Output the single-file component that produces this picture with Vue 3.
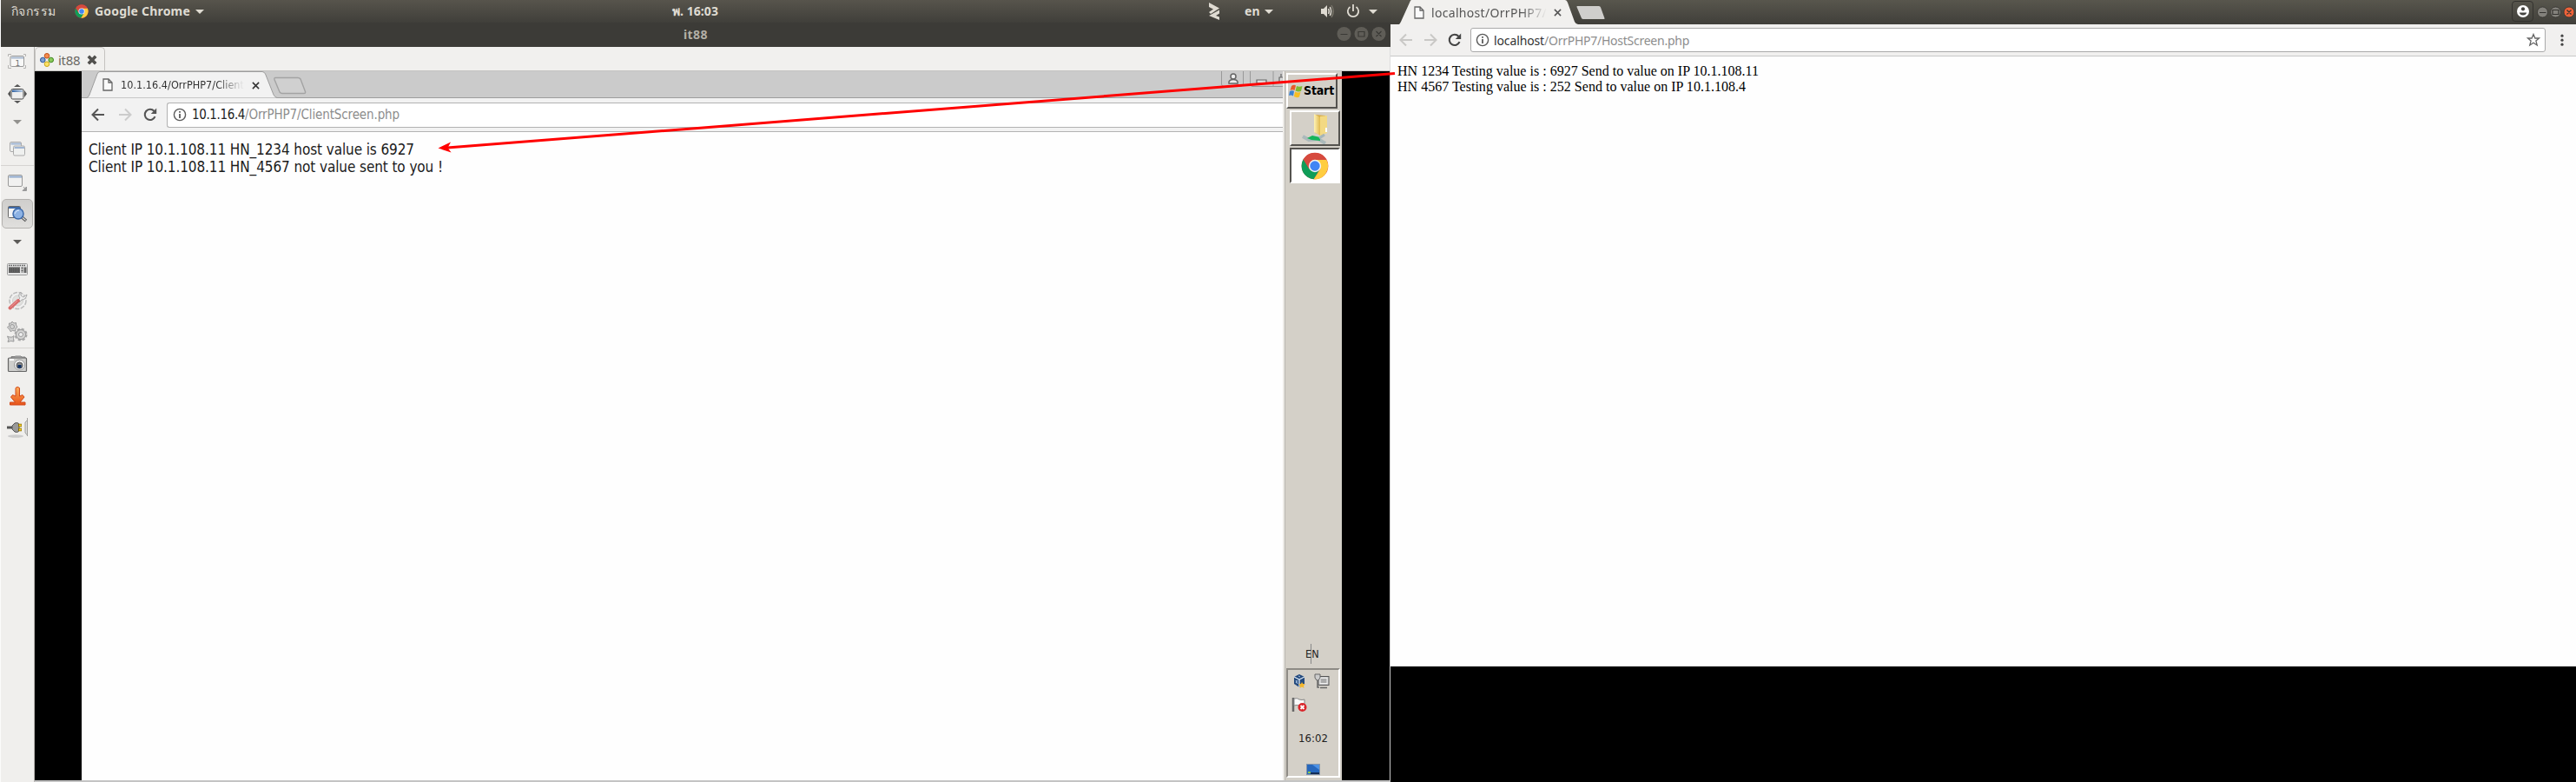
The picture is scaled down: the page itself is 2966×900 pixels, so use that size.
<script setup>
// Spreads a label's letters so that it takes up a given width.
const vFit = {
  mounted(el, { value }) {
    const width = el.getBoundingClientRect().width
    const count = Array.from(el.textContent).length
    el.style.letterSpacing = (value - width) / count + 'px'
  }
}

const tools = [
  { name: 'fit', h: 34 },
  { name: 'full', h: 40 },
  { name: 'caret', h: 24 },
  { name: 'windows', h: 38 },
  { name: 'sep', h: 1 },
  { name: 'resize', h: 38 },
  { name: 'scale', h: 34, active: true },
  { name: 'caret', h: 30, dark: true },
  { name: 'keyboard', h: 34 },
  { name: 'prefs', h: 38 },
  { name: 'gears', h: 35 },
  { name: 'sep', h: 1 },
  { name: 'camera', h: 37 },
  { name: 'down', h: 36 },
  { name: 'plug', h: 36 }
]
</script>

<template>
  <div class="desk">
    <svg class="defs" width="0" height="0">
      <defs>
        <symbol id="chrome" viewBox="0 0 48 48">
          <circle cx="24" cy="24" r="23" fill="#db4437" />
          <path d="M4 12.5A23 23 0 0 0 22 47L33 29L24 24L14 29Z" fill="#0f9d58" />
          <path d="M44 13.5A23 23 0 0 1 22 47L34 28L24 13.5Z" fill="#ffcd40" />
          <path d="M4 12.5A23 23 0 0 1 44 13.5H24L14 29Z" fill="#d64a3e" />
          <circle cx="24" cy="24" r="10.8" fill="#f4f4f4" />
          <circle cx="24" cy="24" r="8.5" fill="#4285f4" />
        </symbol>
        <symbol id="back" viewBox="0 0 16 16">
          <path d="M15 8H2M8 1.5L1.5 8L8 14.5" fill="none" stroke="currentColor" stroke-width="2" />
        </symbol>
        <symbol id="reload" viewBox="0 0 16 16">
          <path d="M13.5 10.2A6.1 6.1 0 1 1 12.4 3.8" fill="none" stroke="currentColor" stroke-width="2.1" />
          <path d="M15.2 0.6V7H8.8Z" fill="currentColor" />
        </symbol>
        <symbol id="info" viewBox="0 0 16 16">
          <circle cx="8" cy="8" r="6.6" fill="none" stroke="#5a5a5a" stroke-width="1.4" />
          <path d="M8 4V5.8M8 7V12" stroke="#5a5a5a" stroke-width="1.8" />
        </symbol>
        <symbol id="page" viewBox="0 0 12 15">
          <path d="M1 1H7L11 5V14H1ZM7 1V5H11" fill="#fafafa" stroke="#666" stroke-width="1.3" />
        </symbol>
        <symbol id="cross" viewBox="0 0 10 10">
          <path d="M1 1L9 9M9 1L1 9" stroke="currentColor" stroke-width="1.7" />
        </symbol>
        <linearGradient id="blue" x1="0" x2="1"><stop offset="0" stop-color="#3465a4" /><stop offset="1" stop-color="#b9cbe2" /></linearGradient>
        <linearGradient id="orange" x1="0" y1="0" x2="0" y2="1"><stop offset="0" stop-color="#fcae5c" /><stop offset="1" stop-color="#e8541a" /></linearGradient>
        <linearGradient id="folder" x1="0" x2="1"><stop offset="0" stop-color="#fff3b5" /><stop offset="1" stop-color="#e0b94e" /></linearGradient>
      </defs>
    </svg>

    <section class="left">
      <header class="topbar">
        <span class="activities"><span v-fit="52">กิจกรรม</span></span>
        <svg width="16" height="16"><use href="#chrome" /></svg>
        <span class="app"><b v-fit="110">Google Chrome</b></span>
        <i class="tri"></i>
        <span class="clock"><b v-fit="53">พ. 16:03</b></span>
        <span class="grow"></span>
        <svg class="zed" width="12" height="20" viewBox="0 0 12 20"><path d="M0 0L12 6.500L2 13L0 11L5 7.500L0 5ZM12 8.500V12.500L8 15L12 16.500V20L0 15Z" fill="#dfdbd2" /></svg>
        <span class="lang"><b v-fit="18">en</b></span>
        <i class="tri"></i>
        <svg class="vol" width="16" height="16" viewBox="0 0 16 16"><path d="M0 5H3L7 1V15L3 11H0Z" fill="#dfdbd2" /><path d="M8.6 5Q10 8 8.6 11" fill="none" stroke="#dfdbd2" stroke-width="1.6" /><path d="M10.3 3Q13 8 10.3 13" fill="none" stroke="#dfdbd2" stroke-width="1.5" /><path d="M12 1.2Q16.5 8 12 14.8" fill="none" stroke="#777469" stroke-width="1.5" /></svg>
        <svg class="power" width="16" height="16" viewBox="0 0 16 16"><path d="M4.5 2.9A6.2 6.2 0 1 0 11.5 2.9M8 0V8" fill="none" stroke="#dfdbd2" stroke-width="1.8" /></svg>
        <i class="tri last"></i>
      </header>
      <div class="winbar">
        <b v-fit="28">it88</b>
        <svg class="winbtns" width="58" height="18" viewBox="0 0 58 18">
          <g fill="#5f5d57"><circle cx="8.5" cy="9" r="8" /><circle cx="28.5" cy="9" r="8" /><circle cx="48.5" cy="9" r="8" /></g>
          <path d="M4.5 9.5H12.5M25 6.5H32V12H25ZM45.5 6L51.5 12M51.5 6L45.5 12" fill="none" stroke="#3a3935" stroke-width="1.2" />
        </svg>
      </div>

      <div class="remote">
        <nav class="side">
          <div v-for="(t, i) in tools" :key="i" class="tool" :class="{ active: t.active, sep: t.name === 'sep' }" :style="{ height: t.h + 'px' }">
            <svg v-if="t.name !== 'sep'" width="30" height="30" viewBox="0 0 30 30">
              <g v-if="t.name === 'fit'" fill="none" stroke="#b5b4b2">
                <path d="M4.500 9V6.500H8M22 6.500H24.500V9M24.500 19V22.500H22M8 22.500H4.500V19" />
                <rect x="7" y="8.500" width="15.500" height="12" rx="1.500" fill="#f8f8f7" stroke="#999" />
                <path d="M8 10.500H22" stroke="#a8b9cf" stroke-width="2" />
                <text x="12.500" y="19.500" fill="#777" stroke="none" class="one">1</text>
              </g>
              <g v-else-if="t.name === 'full'">
                <path d="M11 7L15 4L19 7ZM11 23L15 26L19 23ZM7 11L4 15L7 19ZM23 11L26 15L23 19Z" fill="#555" />
                <rect x="8" y="9.500" width="14" height="11.500" rx="1.500" fill="#eee" stroke="#444" />
                <rect x="9" y="10.500" width="12" height="2.500" fill="url(#blue)" />
              </g>
              <path v-else-if="t.name === 'caret'" d="M10 13H20L15 18Z" :fill="t.dark ? '#5c5b58' : '#92918e'" />
              <g v-else-if="t.name === 'windows'" fill="#eff0ef" stroke="#aaa">
                <rect x="6.500" y="7.500" width="13" height="11" rx="1.500" /><path d="M7.500 9.500H19" stroke="#9fb5d3" stroke-width="2" />
                <rect x="10.500" y="12" width="13" height="11" rx="1.500" /><path d="M11.500 14H23" stroke="#9fb5d3" stroke-width="2" />
              </g>
              <g v-else-if="t.name === 'resize'" fill="#f1f1f0" stroke="#999">
                <rect x="4.500" y="6.500" width="16" height="13" rx="1.500" /><path d="M5.500 8.500H20" stroke="#8fa9cc" stroke-width="2" />
                <path d="M25.500 20V24.500H21ZM22 20L25 23.500" fill="#999" />
              </g>
              <g v-else-if="t.name === 'scale'">
                <rect x="4.500" y="6.500" width="14" height="13" rx="1" fill="#f5f5f5" stroke="#666" /><path d="M5 8H18" stroke="#3f6aa8" stroke-width="2" />
                <path d="M19 18L25 23" stroke="#555" stroke-width="3.500" /><path d="M19 18L24.500 22.500" stroke="#ddd" stroke-width="1.200" />
                <circle cx="16" cy="15" r="6" fill="#8db2e3" stroke="#3b69aa" stroke-width="1.500" /><path d="M12 15Q13 11 17 11" fill="none" stroke="#dbe9fa" />
              </g>
              <g v-else-if="t.name === 'keyboard'">
                <rect x="3.500" y="8.500" width="23" height="13" rx="1" fill="#e6e6e6" stroke="#9a9a9a" />
                <path d="M5 10.500H24.500" stroke="#555" stroke-width="1.500" stroke-dasharray="1.500 1" />
                <rect x="5" y="12.500" width="13" height="6.500" fill="#555" /><path d="M5 14.500H18M5 17H18" stroke="#8a8a8a" stroke-width=".8" stroke-dasharray="1 1" />
                <path d="M20.500 12.500V19" stroke="#555" stroke-width="2" stroke-dasharray="2 1" /><rect x="22.500" y="12.500" width="3" height="6.500" fill="#666" />
              </g>
              <g v-else-if="t.name === 'prefs'">
                <circle cx="15.500" cy="15" r="9.500" fill="#f0f0f0" stroke="#bbb" stroke-width="1.500" stroke-dasharray="5 1.500" /><circle cx="15.500" cy="15" r="6" fill="#e0e0de" stroke="#d0d0ce" />
                <path d="M19 5Q15 9 18 12L15 15L17 17L20 14Q25 14 26 8L22 11L19 9Z" fill="#eee" stroke="#aaa" />
                <path d="M6.500 23.500L16 15" stroke="#d96c6c" stroke-width="4" stroke-linecap="round" /><path d="M7 22.500L15 15" stroke="#eb9c9c" />
              </g>
              <g v-else-if="t.name === 'gears'" fill="#d5d5d4" stroke="#999">
                <path d="M9 2L11 4L13.500 3.500L13.500 6L15 8.500L13 10L12.500 13L9.500 12.500L7 13.500L6 11L3.500 9L5.500 6.500L5.500 4L8 4Z" /><circle cx="9" cy="8" r="2.500" />
                <path d="M3.500 19L6 20L9 20L11 18.500L10.500 21.500L11 25L7.500 24.500L4 25.500L5 22.500Z" />
                <circle cx="19" cy="17" r="6.500" stroke-width="2" stroke-dasharray="3.100 2" stroke="#aaa" /><circle cx="19" cy="17" r="5.500" /><circle cx="19" cy="17" r="2.500" fill="#eee" />
              </g>
              <g v-else-if="t.name === 'camera'">
                <path d="M8 7V5.500H12L13 5H19L20 6H24V8" fill="#bbb" stroke="#777" />
                <rect x="4.500" y="7" width="21" height="15.500" rx="1" fill="#cfcfcd" stroke="#666" stroke-width="1.200" /><path d="M6 9H11" stroke="#fff" stroke-width="2" />
                <circle cx="17.500" cy="15" r="6" fill="#eee" stroke="#999" /><circle cx="17.500" cy="15.500" r="3.500" fill="#888" stroke="#555" /><rect x="15.500" y="15" width="4" height="3.500" fill="#0c2f66" />
              </g>
              <path v-else-if="t.name === 'down'" d="M13 5.500Q15 3 17.500 5.500V15L21 13.500L23 16L18 22H24V25H6.500V22H12.500L7.500 16L9.500 13.500L13 15Z" fill="url(#orange)" stroke="#d2491a" stroke-linejoin="round" />
              <g v-else>
                <ellipse cx="13" cy="25" rx="9" ry="1.800" fill="#ccc" />
                <path d="M3 15H11" stroke="#555" stroke-width="3" /><path d="M9 13L12 10Q18 8 17 15Q18 22 12 20L9 17Z" fill="#999" stroke="#555" />
                <path d="M16 12.500H20M16 17.500H20" stroke="#8a6d00" stroke-width="3.500" /><path d="M17 12.500H19.500M17 17.500H19.500" stroke="#f6d22b" stroke-width="2" />
                <path d="M26.500 4V25M26.500 6.500L24 9V21L26.500 24" fill="#ddd" stroke="#a0a09d" />
              </g>
            </svg>
          </div>
        </nav>

        <div class="session">
          <div class="sessiontabs">
            <div class="stab">
              <svg width="16" height="16" viewBox="0 0 16 16">
                <circle cx="8" cy="3.300" r="2.800" fill="#f58b4c" stroke="#c0511b" /><circle cx="3.300" cy="8" r="2.800" fill="#7b9fd4" stroke="#2c5597" /><circle cx="12.700" cy="8" r="2.800" fill="#8acb5a" stroke="#3f8420" /><circle cx="8" cy="12.700" r="2.800" fill="#fbe266" stroke="#c9a51b" />
              </svg>
              <span v-fit="27">it88</span>
              <svg width="12" height="12" viewBox="0 0 12 12"><path d="M1.800 1.800L10.200 10.200M10.200 1.800L1.800 10.200" stroke="#51504d" stroke-width="3.600" /></svg>
            </div>
          </div>
          <div class="screen">
            <main class="client">
              <div class="cstrip">
                <svg width="262" height="31" viewBox="0 0 262 31">
                  <path d="M0 30.500H6Q8 30 9 27L18 3Q19 0.500 21 0.500H208Q210 0.500 211.500 3L221 27Q222.500 30 225 30.500H262" fill="#f2f2f2" stroke="#9d9d9d" />
                  <path d="M223 7.500H249Q251 7.500 252 9L257.500 23.500Q258 25.500 256 25.500H231Q229 25.500 228 24L222 9.500Q221.500 7.500 223 7.500Z" fill="#d0d0d0" stroke="#a3a3a3" stroke-width="1.400" />
                </svg>
                <div class="ctab">
                  <svg width="12" height="15"><use href="#page" /></svg>
                  <span v-fit="142" class="fade">10.1.16.4/OrrPHP7/Client</span>
                  <svg class="cx" width="9" height="9"><use href="#cross" /></svg>
                </div>
                <svg class="cwin" width="72" height="18" viewBox="0 0 72 18">
                  <path d="M1.500 0V15Q2 17.500 4 17.500H24Q26.500 17 26.500 14V0M34.500 0V15Q35 17.500 37 17.500H72M61 0V17" fill="none" stroke="#999" />
                  <circle cx="15" cy="6" r="3" fill="#eee" stroke="#666" stroke-width="1.500" /><path d="M10 14V12Q11 9.500 15 9.500Q19 9.500 20 12V14Z" fill="#eee" stroke="#666" stroke-width="1.500" />
                  <path d="M42 14V10H53V14ZM68 14V7H72M70 7V3" fill="#ddd" stroke="#666" stroke-width="1.200" />
                </svg>
              </div>
              <div class="cbar">
                <svg class="g1" width="16" height="16"><use href="#back" /></svg>
                <svg class="flip pale g2" width="16" height="16"><use href="#back" /></svg>
                <svg class="g3" width="16" height="16"><use href="#reload" /></svg>
                <div class="cbox">
                  <svg width="16" height="16"><use href="#info" /></svg>
                  <span><span v-fit="61">10.1.16.4</span><span v-fit="178" class="path">/OrrPHP7/ClientScreen.php</span></span>
                </div>
              </div>
              <div class="cbody">
                <div><span v-fit="375">Client IP 10.1.108.11 HN_1234 host value is 6927</span></div>
                <div><span v-fit="408">Client IP 10.1.108.11 HN_4567 not value sent to you !</span></div>
              </div>
            </main>
            <aside class="taskbar">
              <div class="start">
                <svg width="17" height="16" viewBox="0 0 17 16">
                  <path d="M3 2Q6 0 8 1.500L6.500 7Q4 5.500 1.500 7Z" fill="#e8592b" /><path d="M9 2Q12 3.500 15.500 2L14 8Q11 9 7.500 7.500Z" fill="#7fb92f" />
                  <path d="M1 8Q4 6.500 6 8L5 13.500Q2.500 12 0 13Z" fill="#3a83d2" /><path d="M7.200 8.500Q10 10 13.500 9L12 14.500Q9 16 5.800 14Z" fill="#f7bd22" />
                </svg>
                <b v-fit="35">Start</b>
              </div>
              <div class="task">
                <svg width="32" height="36" viewBox="0 0 32 36">
                  <path d="M16 2L28 3V22L25 26L16 23Z" fill="#d9ae46" /><path d="M15 1L22 5V26L15 22Z" fill="url(#folder)" /><path d="M22 4L30 3V23L22 26Z" fill="#f3d983" /><path d="M29 17V22" stroke="#fff" stroke-width="2" />
                  <path d="M2 27L9 31L20 30L28 35" fill="none" stroke="#abb9bb" stroke-width="4" /><path d="M7 29L13 26L22 28V32L12 31Z" fill="#16b55b" /><path d="M21 29L27 25" stroke="#a6b6b9" stroke-width="3" />
                </svg>
              </div>
              <div class="task on"><svg width="32" height="32"><use href="#chrome" /></svg></div>
              <div class="en"><span v-fit="16">EN</span></div>
              <div class="tray">
                <div class="icons">
                  <svg width="18" height="18" viewBox="0 0 18 18"><path d="M9 1L15 4V12L9 16L3 12V4Z" fill="#244a7d" /><path d="M3 4L9 7L15 4M9 7V16" stroke="#dce7f3" fill="none" stroke-width="1.300" /><path d="M5 8L7 12M7 8L5 11M8 3L10 4" stroke="#a9c4e5" /><path d="M12 10L13.200 12L16 12.500L14 14L14.500 17L12 15.500L9.500 17L10 14L8 12.500L11 12Z" fill="#f4b72c" /></svg>
                  <svg width="18" height="18" viewBox="0 0 18 18"><rect x="5" y="3.500" width="12" height="10" fill="#ccc" stroke="#555" /><rect x="7" y="5.500" width="8" height="6" fill="#aaa" stroke="#eee" /><path d="M7 16.500H15M4 7V16H6" fill="none" stroke="#666" stroke-width="1.500" /><path d="M1 1H7V5L5 8H3L1 5Z" fill="#ccc" stroke="#666" /></svg>
                  <svg width="18" height="18" viewBox="0 0 18 18"><path d="M2 1V17" stroke="#666" stroke-width="2.500" /><path d="M3 2Q7 1 9 3Q12 4 15 3V11Q12 12 9 10Q6 9 3 10Z" fill="#fafafa" stroke="#888" /><circle cx="12.500" cy="12" r="5" fill="#d9252b" /><path d="M10.500 10L14.500 14M14.500 10L10.500 14" stroke="#fff" stroke-width="1.800" /></svg>
                </div>
                <span v-fit="34" class="time">16:02</span>
                <svg class="desktop" width="16" height="13" viewBox="0 0 16 13"><rect x=".5" y=".5" width="15" height="12" fill="#2667bd" stroke="#8897aa" /><path d="M7 1H15V7Z" fill="#4d92e6" /><path d="M5 11H15" stroke="#142c55" stroke-width="2" /><path d="M2 10H5" stroke="#8ec94a" stroke-width="2" /></svg>
              </div>
            </aside>
          </div>
        </div>
      </div>
    </section>

    <section class="right">
      <header class="rstrip">
        <svg width="216" height="28" viewBox="0 0 216 28"><path d="M10 28Q11 27 12 25L22 3Q23 0 24 0H201Q203 0 204 3L212 25Q213.500 28 216 28Z" fill="#f1f0ee" /></svg>
        <svg class="newtab" width="34" height="16" viewBox="0 0 34 16"><path d="M1 0H26Q27.500 0 28 1.500L32.500 14Q33 15 31.500 15H8Q6.500 15 6 14L.5 1Q.3 0 1 0Z" fill="#cfcecc" /></svg>
        <div class="rtab">
          <svg width="12" height="15"><use href="#page" /></svg>
          <span v-fit="133" class="fade">localhost/OrrPHP7/</span>
          <svg class="rx" width="9" height="9"><use href="#cross" /></svg>
        </div>
        <span class="grow"></span>
        <div class="user"><svg width="14" height="14" viewBox="0 0 14 14"><circle cx="7" cy="7" r="7" fill="#fff" /><circle cx="7" cy="4.300" r="2.100" fill="#454440" /><path d="M2.800 8.500H11.200Q10.500 11.500 7 11.500Q3.500 11.500 2.800 8.500Z" fill="#454440" /></svg></div>
        <svg class="rbtns" width="46" height="14" viewBox="0 0 46 14">
          <g fill="#83817b" stroke="#353430" stroke-width=".8"><circle cx="7.500" cy="7" r="6" /><circle cx="22.500" cy="7" r="6" /><circle cx="38" cy="7" r="6" fill="#ee6239" /></g>
          <path d="M4 7.500H11.500M19 4.500H26V9.500H19ZM35.500 4.500L40.500 9.500M40.500 4.500L35.500 9.500" fill="none" stroke="#353430" stroke-width="1.200" />
        </svg>
      </header>
      <div class="rbar">
        <svg class="pale r1" width="16" height="16"><use href="#back" /></svg>
        <svg class="pale flip r2" width="16" height="16"><use href="#back" /></svg>
        <svg class="r3" width="16" height="16"><use href="#reload" /></svg>
        <div class="rbox">
          <svg width="16" height="16"><use href="#info" /></svg>
          <span class="url"><span v-fit="58">localhost</span><span v-fit="167" class="path">/OrrPHP7/HostScreen.php</span></span>
          <svg width="16" height="16" viewBox="0 0 16 16"><path d="M8 1.500L9.900 6H14.500L10.900 9L12.200 14L8 11.200L3.800 14L5.100 9L1.500 6H6.100Z" fill="none" stroke="#666" stroke-width="1.300" /></svg>
        </div>
        <svg class="dots" width="4" height="16" viewBox="0 0 4 16"><g fill="#444"><circle cx="2" cy="3.200" r="1.600" /><circle cx="2" cy="8.200" r="1.600" /><circle cx="2" cy="13.200" r="1.600" /></g></svg>
      </div>
      <div class="rbody">
        <div><span v-fit="416">HN 1234 Testing value is : 6927 Send to value on IP 10.1.108.11</span></div>
        <div><span v-fit="401">HN 4567 Testing value is : 252 Send to value on IP 10.1.108.4</span></div>
      </div>
    </section>

    <svg class="arrow" width="1110" height="110" viewBox="500 75 1110 110">
      <path d="M515 170L1606 84.500" stroke="#f00" stroke-width="3" /><path d="M504.500 170.500L519 163.500L515.500 170L519.500 175.500Z" fill="#f00" />
    </svg>
  </div>
</template>

<style>
body { background: #000; overflow: hidden; }
</style>

<style scoped>
.desk { position: relative; display: flex; width: 2966px; height: 900px; background: #000; font-family: "Noto Sans", "Open Sans", sans-serif; overflow: hidden; }
.desk span, .desk b { white-space: nowrap; }
.desk svg { flex: none; display: block; }
.defs { position: absolute; }
.grow { flex: 1; }
.left { display: flex; flex-direction: column; width: 1601px; flex: none; box-sizing: border-box; border-left: 1px solid #fbfbfb; }
.topbar { display: flex; align-items: center; height: 26px; color: #dfdbd2; font-size: 14px; background: linear-gradient(#57544c, #403f3a); }
.topbar > span { line-height: 26px; }
.activities { width: 73px; padding-left: 12px; box-sizing: content-box; display: block; }
.app { margin-left: 7px; width: 116px; }
.tri { flex: none; border: 5px solid transparent; border-top-color: #dfdbd2; border-bottom: 0; }
.clock { margin-left: 539px; }
.zed { margin-right: 29px; }
.lang { width: 23px; }
.vol { margin-left: 55px; margin-right: 13px; }
.power { margin-right: 10px; }
.last { margin-right: 15px; }
.winbar { display: flex; align-items: center; height: 28px; background: #3c3b37; color: #b3afa6; font-size: 14px; padding-left: 786px; }
.winbar b { margin-top: -2px; }
.winbtns { margin-left: auto; margin-right: 4px; margin-top: -2px; }
.remote { display: flex; flex: 1; min-height: 0; }
.side { width: 38px; flex: none; background: #f0efed; border-right: 1px solid #b8b6b3; }
.tool { display: flex; align-items: center; justify-content: center; box-sizing: border-box; }
.tool svg { margin: -4px 0; }
.sep { background: #d6d4d1; }
.active { margin: 0 1px; border: 1px solid #b4b2af; border-radius: 5px; background: linear-gradient(#cfcecc, #e0dfdd); }
.one { font: 9px "DejaVu Sans", sans-serif; }
.session { flex: 1; display: flex; flex-direction: column; }
.sessiontabs { height: 28px; box-sizing: border-box; background: #f1f0ee; border-bottom: 1px solid #c4c3c1; border-right: 1px solid #ddd; }
.stab { width: 81px; height: 28px; box-sizing: border-box; border: 1px solid #c5c3c0; border-bottom: 0; border-radius: 5px 5px 0 0; display: flex; align-items: center; padding-left: 5px; gap: 5px; font-size: 15px; color: #6b6863; }
.stab span { width: 28px; }
.screen { flex: 1; display: flex; padding-left: 54px; border-right: 1px solid #ccc; border-bottom: 2px solid #c4c4c4; background: #000; }
.client { width: 1383px; background: #fefefe; overflow: hidden; }
.cstrip { position: relative; height: 31px; background: #cbcbcb; box-shadow: inset 0 -1px #9d9d9d; display: flex; }
.ctab { position: absolute; left: 24px; top: 0; height: 30px; display: flex; align-items: center; font: 12.5px "DejaVu Sans Condensed", "DejaVu Sans", sans-serif; font-stretch: condensed; color: #333; }
.ctab span { margin-left: 9px; }
.fade { -webkit-mask-image: linear-gradient(90deg, #000 78%, transparent); mask-image: linear-gradient(90deg, #000 78%, transparent); }
.cx { margin-left: 9px; margin-top: 2px; }
.cwin { margin-left: auto; }
.cbar { height: 39px; box-sizing: border-box; border-bottom: 1px solid #b3b3b3; background: #f2f2f2; display: flex; align-items: center; color: #555; }
.g1 { margin-left: 11px; }
.g2 { margin-left: 15px; }
.g3 { margin-left: 13px; }
.flip { transform: scaleX(-1); }
.pale { color: #ccc; }
.cbox { margin-left: 11px; flex: 1; height: 29px; box-sizing: border-box; border: 1px solid #b2b2b2; border-right: 0; border-radius: 3px 0 0 3px; background: #fff; display: flex; align-items: center; gap: 6px; padding-left: 6px; font: 15px "DejaVu Sans Condensed", "DejaVu Sans", sans-serif; font-stretch: condensed; color: #222; }
.path { color: #8d8d8d; }
.cbody { padding: 10px 8px; font: 17px/20px "DejaVu Sans Condensed", "DejaVu Sans", sans-serif; font-stretch: condensed; color: #1b1b1b; }
.taskbar { width: 68px; box-sizing: border-box; border-left: 2px solid #eceae6; box-shadow: inset 1px 0 #b9b6b0; background: #d4d0c8; display: flex; flex-direction: column; padding: 2px 2px 3px 2px; }
.start { display: flex; align-items: center; width: 59px; height: 41px; box-sizing: border-box; border: 2px solid; border-color: #fff #55534f #55534f #fff; font: bold 14px "DejaVu Sans Condensed", "DejaVu Sans", sans-serif; font-stretch: condensed; color: #000; padding-left: 1px; }
.start b { margin-top: -1px; }
.task { width: 58px; height: 41px; margin: 2px 0 0 4px; box-sizing: border-box; border: 2px solid; border-color: #fff #55534f #55534f #fff; display: flex; align-items: center; justify-content: center; }
.on { background: #fff; border-color: #55534f #fff #fff #55534f; }
.en { margin-top: 530px; height: 23px; margin-left: 22px; color: #222; font: 12.5px/23px "DejaVu Sans Condensed", sans-serif; background: linear-gradient(#888, #888) 6px 0 / 1px 100% no-repeat; }
.tray { margin-top: auto; height: 126px; width: 62px; box-sizing: border-box; border: 2px solid; border-color: #8e8b85 #fff #fff #8e8b85; display: flex; flex-direction: column; font: 13px "DejaVu Sans Condensed", sans-serif; color: #222; }
.icons { display: grid; grid-template-columns: 18px 18px; gap: 9px 8px; padding: 4px 0 0 4px; }
.time { margin: 22px 0 0 12px; align-self: flex-start; }
.desktop { margin: 22px 0 0 21px; }
.right { flex: 1; display: flex; flex-direction: column; font-family: "Noto Sans", sans-serif; }
.rstrip { position: relative; display: flex; height: 28px; background: linear-gradient(#58564d, #403f3a); }
.newtab { margin: 7px 0 0 -2px; }
.rtab { position: absolute; left: 27px; top: 0; height: 28px; display: flex; align-items: center; font-size: 14px; color: #555; }
.rtab span { margin-left: 8px; }
.rx { margin-left: 8px; }
.user { width: 25px; height: 24px; box-sizing: border-box; border: 1px solid #33322e; border-radius: 4px; margin: 1px 3px 0 0; display: flex; align-items: center; justify-content: center; }
.rbtns { margin: 7px 0 0; }
.rbar { height: 37px; box-sizing: border-box; background: #f1f0ef; border-bottom: 1px solid #c8c8c8; display: flex; align-items: center; color: #444; }
.rbar .pale { color: #c9c8c6; }
.r1 { margin-left: 10px; }
.r2 { margin-left: 12px; }
.r3 { margin-left: 12px; }
.rbox { margin-left: 10px; width: 1238px; height: 28px; box-sizing: border-box; border: 1px solid #aaa; border-radius: 3px; background: #fff; display: flex; align-items: center; padding: 0 5px; font-size: 14px; color: #333; }
.url { margin-left: 5px; margin-right: auto; }
.dots { margin-left: 17px; }
.rbody { height: 702px; box-sizing: border-box; background: #fefefe; padding: 8px; font: 16px/18px "Liberation Serif", serif; color: #000; }
.arrow { position: absolute; left: 500px; top: 75px; }
</style>
